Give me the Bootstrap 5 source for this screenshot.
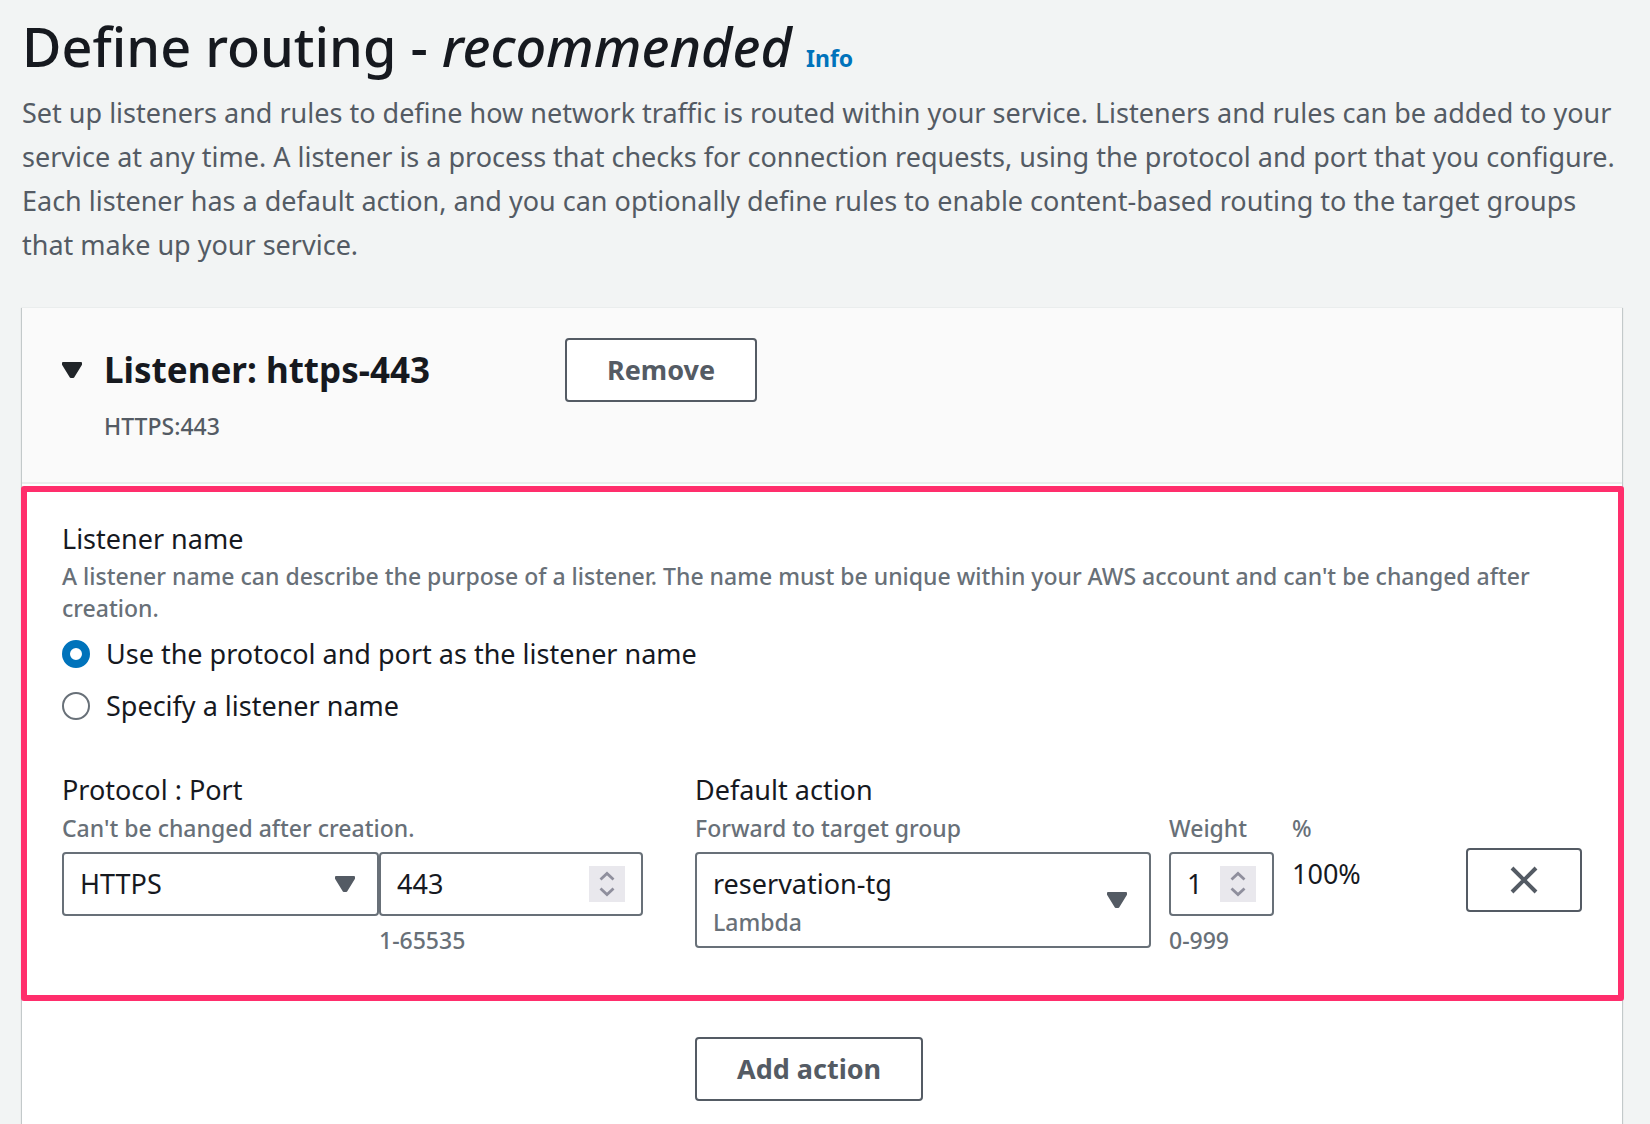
<!DOCTYPE html>
<html lang="en">
<head>
<meta charset="utf-8">
<meta name="viewport" content="width=device-width, initial-scale=1">
<title>Define routing</title>
<link href="https://cdn.jsdelivr.net/npm/bootstrap@5.3.0/dist/css/bootstrap.min.css" rel="stylesheet">
<style>
  :root { --ink: #16191f; --slate: #545b64; --muted: #687078; --blue: #0073bb; --line: #eaeded; --pink: #ff2e6c; }
  body { background: #f2f4f4; color: var(--ink); font-family: "Noto Sans", "Open Sans", sans-serif; font-size: 27px; line-height: 36px; }
  .page { padding: 16px 28px 0 22px; }
  .page-title { font-size: 54px; line-height: 60px; font-weight: 500; }
  .info-link { font-size: 23px; line-height: 24px; color: var(--blue); }
  .intro { color: var(--slate); line-height: 44px; margin: 15px 0 40px; }
  .panel { background: #fff; box-shadow: 0 1px 1px 0 rgba(0,28,36,.3), 1px 1px 1px 0 rgba(0,28,36,.15), -1px 1px 1px 0 rgba(0,28,36,.15); border-top: 1px solid var(--line); }
  .panel-head { background: #fafafa; border-bottom: 2px solid var(--line); padding: 30px 40px 40px; }
  .head-title { font-size: 35px; line-height: 44px; font-weight: 700; }
  .head-main { width: 503px; }
  .twist { width: 42px; line-height: 0; }
  .head-sub { margin: 8px 0 0 42px; color: var(--slate); }
  .fine { font-size: 23px; line-height: 32px; font-weight: 500; }
  .hint { color: var(--muted); }
  .btn-line { height: 64px; padding: 0 40px; border: 2px solid var(--slate); border-radius: 4px; background: #fff; color: var(--slate); font-size: 27px; font-weight: 700; line-height: 36px; }
  .btn-line:hover { background: #fafafa; color: var(--ink); border-color: var(--ink); }
  .btn-close-x { width: 116px; padding: 0; line-height: 0; }
  .focus-box { border: 6px solid var(--pink); border-radius: 3px; margin: 2px -2px 0 -1px; padding: 29px 36px 39px 35px; }
  .field-legend { float: none; font-size: 27px; line-height: 36px; margin: 0; }
  .label-gap { margin-top: 3px; }
  .split { display: grid; grid-template-columns: 581fr 887fr; column-gap: 52px; }
  .action-grid { display: grid; grid-template-columns: 456fr 105px 156fr 116px; column-gap: 18px; }
  .choice { gap: 16px; }
  .choice .form-check-input { width: 28px; height: 28px; margin: 0; border: 2px solid var(--muted); flex: none; }
  .choice .form-check-input:checked { background: #fff; border: 8px solid var(--blue); }
  .port-grid { display: grid; grid-template-columns: 317fr 264fr; }
  .box { display: flex; align-items: center; border: 2px solid var(--muted); border-radius: 4px; background: #fff; min-height: 64px; padding: 0 16px; }
  .box select, .box input { border: 0; outline: 0; background: transparent; color: var(--ink); padding: 0; min-width: 0; width: 100%; appearance: none; height: 36px; line-height: 36px; }
  .box input { -moz-appearance: textfield; }
  .box input::-webkit-inner-spin-button { -webkit-appearance: none; margin: 0; }
  .box:focus-within { border-color: var(--blue); }
  .caret { flex: none; margin-right: 6px; pointer-events: none; }
  .target-box { min-height: 96px; }
  .stepper { flex: none; width: 36px; height: 36px; background: #e9e8ed; border: 0; padding: 0; line-height: 0; }
  .remove-cell { padding-top: 36px; }
  .add-row { padding: 36px 40px 22px; }
  .add-row .btn-line { grid-column: 2; justify-self: start; }
</style>
</head>
<body>
<svg width="0" height="0" class="position-absolute" aria-hidden="true">
  <symbol id="tri" viewBox="0 0 20 16"><path d="M1 1h18v1.500L11.300 15H8.700L1 2.500z" fill="currentColor" stroke="currentColor" stroke-width="2" stroke-linejoin="round"/></symbol>
  <symbol id="updown" viewBox="0 0 36 36"><path d="M11.500 13.500L18 7.500l6.500 6M11.500 22.500l6.500 6 6.500-6" fill="none" stroke="#8f8f9d" stroke-width="2.800"/></symbol>
</svg>
<main class="page d-flex flex-column min-vh-100">
  <h1 class="page-title mb-0">Define routing - <em>recommended</em> <a href="#" class="info-link fw-bold text-decoration-none">Info</a></h1>
  <p class="intro">Set up listeners and rules to define how network traffic is routed within your service. Listeners and rules can be added to your service at any time. A listener is a process that checks for connection requests, using the protocol and port that you configure. Each listener has a default action, and you can optionally define rules to enable content-based routing to the target groups that make up your service.</p>

  <section class="panel flex-grow-1">
    <header class="panel-head">
      <div class="d-flex align-items-center">
        <div class="head-main d-flex align-items-center">
          <button class="twist btn p-0 border-0 text-start" type="button" aria-label="Collapse listener">
            <svg width="20" height="16"><use href="#tri"/></svg>
          </button>
          <h2 class="head-title mb-0">Listener: https-443</h2>
        </div>
        <button class="btn btn-line" type="button">Remove</button>
      </div>
      <p class="head-sub fine mb-0">HTTPS:443</p>
    </header>

    <div class="focus-box">
      <fieldset class="mb-5">
        <legend class="field-legend">Listener name</legend>
        <p class="fine hint label-gap mb-0">A listener name can describe the purpose of a listener. The name must be unique within your AWS account and can't be changed after creation.</p>
        <div class="choice d-flex align-items-center mt-2 pt-1">
          <input class="form-check-input" type="radio" name="naming" id="byPort" checked>
          <label for="byPort">Use the protocol and port as the listener name</label>
        </div>
        <div class="choice d-flex align-items-center mt-3">
          <input class="form-check-input" type="radio" name="naming" id="byName">
          <label for="byName">Specify a listener name</label>
        </div>
      </fieldset>

      <div class="split">
        <div>
          <label class="d-block" for="protocol">Protocol : Port</label>
          <p class="fine hint mt-1 mb-2">Can't be changed after creation.</p>
          <div class="port-grid">
            <div>
              <div class="box">
                <select id="protocol"><option>HTTPS</option><option>HTTP</option></select>
                <svg class="caret" width="20" height="16" color="#545b64"><use href="#tri"/></svg>
              </div>
            </div>
            <div>
              <div class="box">
                <input id="port" type="number" value="443" min="1" max="65535" aria-label="Port">
                <button class="stepper" type="button" aria-label="Change port"><svg width="36" height="36"><use href="#updown"/></svg></button>
              </div>
              <p class="fine hint mt-2 mb-0">1-65535</p>
            </div>
          </div>
        </div>

        <div>
          <div>Default action</div>
          <div class="action-grid mt-1">
            <div>
              <label class="fine hint d-block mb-2" for="target">Forward to target group</label>
              <div class="box target-box">
                <div class="flex-grow-1 pt-1">
                  <select id="target" class="d-block">
                    <option>reservation-tg</option>
                  </select>
                  <div class="fine hint mt-1">Lambda</div>
                </div>
                <svg class="caret" width="20" height="16" color="#545b64"><use href="#tri"/></svg>
              </div>
            </div>
            <div>
              <label class="fine hint d-block mb-2" for="weight">Weight</label>
              <div class="box">
                <input id="weight" type="number" value="1" min="0" max="999">
                <button class="stepper" type="button" aria-label="Change weight"><svg width="36" height="36"><use href="#updown"/></svg></button>
              </div>
              <p class="fine hint mt-2 mb-0">0-999</p>
            </div>
            <div>
              <div class="fine hint">%</div>
              <div class="mt-2 pt-1">100%</div>
            </div>
            <div class="remove-cell">
              <button class="btn btn-line btn-close-x" type="button" aria-label="Remove action">
                <svg width="28" height="28" viewBox="0 0 28 28"><path d="M2 2l24 24M26 2L2 26" fill="none" stroke="#545b64" stroke-width="4"/></svg>
              </button>
            </div>
          </div>
        </div>
      </div>
    </div>

    <div class="add-row split">
      <button class="btn btn-line" type="button">Add action</button>
    </div>
  </section>
</main>
<script src="https://cdn.jsdelivr.net/npm/bootstrap@5.3.0/dist/js/bootstrap.bundle.min.js"></script>
</body>
</html>
